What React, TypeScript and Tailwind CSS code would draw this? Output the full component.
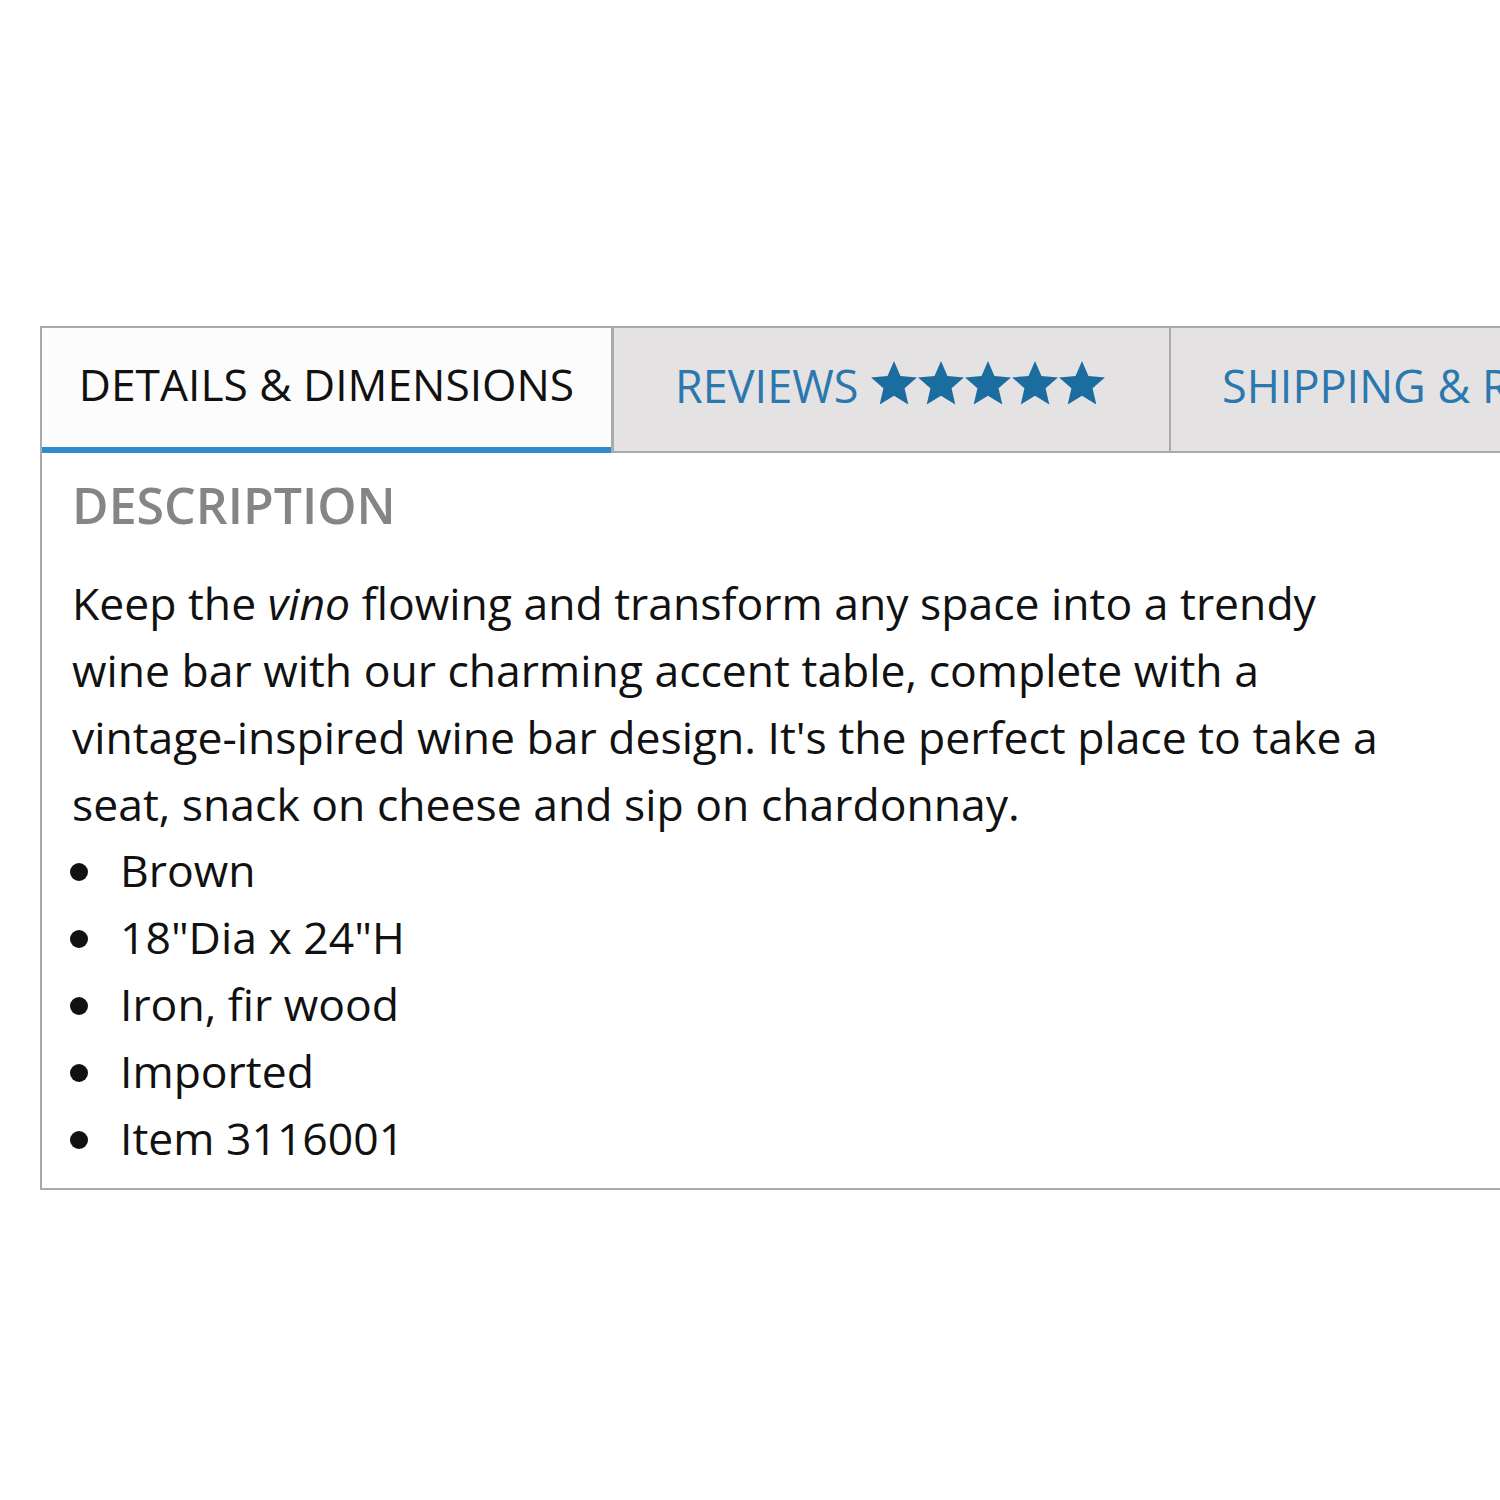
import React from "react";

const Star = () => (
  <svg viewBox="0 0 24 24" className="w-[48px] h-[47px] -mx-[0.5px]" aria-hidden="true">
    <path
      fill="#1b6c9f"
      d="M12 0.5l3.3 7.7 8.4 0.7-6.3 5.5 1.9 8.3L12 18.3l-7.3 4.4 1.9-8.3L0.3 8.9l8.4-0.7z"
    />
  </svg>
);

export default function App() {
  const bullets = ["Brown", '18"Dia x 24"H', "Iron, fir wood", "Imported", "Item 3116001"];
  return (
    <div
      className="w-[1500px] h-[1500px] overflow-hidden bg-white pt-[326px] pl-[40px]"
      style={{ fontFamily: '"Open Sans", "Noto Sans", sans-serif' }}
    >
      <div className="w-[1600px] border-[2px] border-[#a9a9a9] border-r-0 bg-white">
        <div className="flex h-[125px]">
          <div className="w-[569px] shrink-0 bg-[#fcfcfc] flex items-center justify-center border-b-[6px] border-[#2e8bcc] text-[44.3px] text-[#111]">
            <span className="-mt-[6px]">DETAILS &amp; DIMENSIONS</span>
          </div>
          <div className="w-[558px] shrink-0 bg-[#e4e2e3] border-l-[3px] border-b-[2px] border-[#aaaaaa] flex items-center pl-[61px] text-[45px] text-[#2a78ad]">
            <span className="-mt-[8px] mr-[12px]">REVIEWS</span>
            <span className="flex -mt-[12px]">
              <Star />
              <Star />
              <Star />
              <Star />
              <Star />
            </span>
          </div>
          <div className="flex-1 min-w-0 bg-[#e4e2e3] border-l-[2px] border-b-[2px] border-[#aaaaaa] flex items-center pl-[51px] text-[45px] text-[#2a78ad] whitespace-nowrap overflow-hidden">
            <span className="-mt-[8px]">SHIPPING &amp; RETURNS</span>
          </div>
        </div>
        <div className="pl-[30px] pt-[24px] pb-[16px]">
          <h2 className="text-[50px] leading-[1.15] font-semibold text-[#858585]">DESCRIPTION</h2>
          <p className="mt-[34px] w-[1320px] text-[44.5px] leading-[67px] text-[#111]">
            Keep the <em>vino</em> flowing and transform any space into a trendy wine bar with our charming accent
            table, complete with a vintage-inspired wine bar design. It's the perfect place to take a seat, snack on
            cheese and sip on chardonnay.
          </p>
          <ul>
            {bullets.map((b) => (
              <li key={b} className="flex items-center h-[67px] text-[44.5px] text-[#111]">
                <span className="w-[18px] h-[18px] shrink-0 rounded-full bg-[#111] ml-[-2px] mr-[32px] mt-[4px]" />
                <span>{b}</span>
              </li>
            ))}
          </ul>
        </div>
      </div>
    </div>
  );
}
